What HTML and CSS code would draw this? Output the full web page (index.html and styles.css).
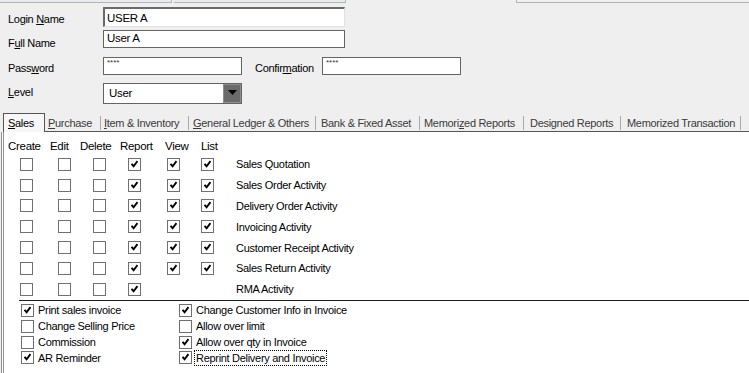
FILE: index.html
```html
<!DOCTYPE html>
<html>
<head>
<meta charset="utf-8">
<link rel="stylesheet" href="styles.css">
</head>
<body>
<div class="topstrip"><i class="seg seg-a"></i><i class="seg seg-b"></i><i class="gapseg"></i><i class="seg seg-c"></i></div>

<div class="form">
  <div class="row r1">
    <label class="lbl">Login <u>N</u>ame</label>
    <div class="inp sunken w-long">USER A</div>
  </div>
  <div class="row r2">
    <label class="lbl">F<u>u</u>ll Name</label>
    <div class="inp w-long">User A</div>
  </div>
  <div class="row r3">
    <label class="lbl">Pass<u>w</u>ord</label>
    <div class="inp w-short pw">****</div>
    <label class="lbl conf">Confir<u>m</u>ation</label>
    <div class="inp w-short pw">****</div>
  </div>
  <div class="row r4">
    <label class="lbl"><u>L</u>evel</label>
    <div class="select">
      <span class="sel-text">User</span>
      <span class="sel-btn"><svg width="9" height="5" viewBox="0 0 9 5"><path d="M0 0H9L4.5 5Z" fill="#000"/></svg></span>
    </div>
  </div>
</div>

<div class="tabs">
  <div class="tab active w1"><span class="tl"><u>S</u>ales</span></div>
  <div class="tab w2"><span class="tl"><u>P</u>urchase</span></div>
  <div class="tab w3"><span class="tl"><u>I</u>tem &amp; Inventory</span></div>
  <div class="tab w4"><span class="tl"><u>G</u>eneral Ledger &amp; Others</span></div>
  <div class="tab w5"><span class="tl">Bank &amp; Fixed Asset</span></div>
  <div class="tab w6"><span class="tl">Memori<u>z</u>ed Reports</span></div>
  <div class="tab w7"><span class="tl">Designed Reports</span></div>
  <div class="tab w8"><span class="tl">Memorized Transaction</span></div>
  <div class="tab-fill"></div>
</div>

<div class="panel">
  <div class="heads">
    <span>Create</span><span>Edit</span><span>Delete</span><span>Report</span><span>View</span><span>List</span>
  </div>

  <div class="matrix">
    <i class="cb"></i><i class="cb"></i><i class="cb"></i><i class="cb on"></i><i class="cb on"></i><i class="cb on"></i><span class="rl">Sales Quotation</span>
    <i class="cb"></i><i class="cb"></i><i class="cb"></i><i class="cb on"></i><i class="cb on"></i><i class="cb on"></i><span class="rl">Sales Order Activity</span>
    <i class="cb"></i><i class="cb"></i><i class="cb"></i><i class="cb on"></i><i class="cb on"></i><i class="cb on"></i><span class="rl">Delivery Order Activity</span>
    <i class="cb"></i><i class="cb"></i><i class="cb"></i><i class="cb on"></i><i class="cb on"></i><i class="cb on"></i><span class="rl">Invoicing Activity</span>
    <i class="cb"></i><i class="cb"></i><i class="cb"></i><i class="cb on"></i><i class="cb on"></i><i class="cb on"></i><span class="rl">Customer Receipt Activity</span>
    <i class="cb"></i><i class="cb"></i><i class="cb"></i><i class="cb on"></i><i class="cb on"></i><i class="cb on"></i><span class="rl">Sales Return Activity</span>
    <i class="cb"></i><i class="cb"></i><i class="cb"></i><i class="cb on"></i><span></span><span></span><span class="rl">RMA Activity</span>
  </div>

  <div class="sep"></div>

  <div class="opts">
    <div class="opt"><i class="cb on"></i><span>Print sales invoice</span></div>
    <div class="opt"><i class="cb on"></i><span>Change Customer Info in Invoice</span></div>
    <div class="opt"><i class="cb"></i><span>Change Selling Price</span></div>
    <div class="opt"><i class="cb"></i><span>Allow over limit</span></div>
    <div class="opt"><i class="cb"></i><span>Commission</span></div>
    <div class="opt"><i class="cb on"></i><span>Allow over qty in Invoice</span></div>
    <div class="opt"><i class="cb on"></i><span>AR Reminder</span></div>
    <div class="opt"><i class="cb on"></i><span class="focus">Reprint Delivery and Invoice</span></div>
  </div>
</div>
</body>
</html>
```
FILE: styles.css
```css
* { box-sizing: border-box; }
html, body { margin: 0; padding: 0; }
body {
  width: 749px;
  height: 373px;
  overflow: hidden;
  background: #efefef;
  font-family: "Liberation Sans", Arial, sans-serif;
  font-size: 11px;
  letter-spacing: -0.3px;
  color: #000;
}
u { text-decoration: underline; text-underline-offset: 1px; }

/* top strip */
.topstrip { display: flex; height: 3px; }
.seg { display: block; height: 3px; font-style: normal; }
.seg-a { width: 172px; background: #e8ecee; border-bottom: 1px solid #b4b4b4; border-right: 1px solid #8fc6d0; }
.seg-b { width: 172px; background: #e8ecee; border-bottom: 1px solid #b4b4b4; border-right: 1px solid #8fc6d0; margin-left: 2px; }
.gapseg { display: block; width: 170px; }
.seg-c { flex: 1; border-bottom: 1px solid #b4b4b4; border-left: 1px solid #8fc6d0; }

/* form */
.form { display: flex; flex-direction: column; }
.row { display: flex; align-items: flex-start; padding-left: 8px; }
.r1 { margin-top: 4px; height: 20px; }
.r2 { margin-top: 3px; height: 18px; }
.r3 { margin-top: 9px; height: 18px; }
.r4 { margin-top: 8px; height: 21px; }
.lbl { width: 95px; line-height: 13px; }
.r1 .lbl { padding-top: 6px; }
.r2 .lbl { padding-top: 7px; }
.r3 .lbl { padding-top: 5px; }
.r4 .lbl { padding-top: 3px; }
.lbl.conf { width: 67px; margin-left: 13px; }

.inp {
  background: #fff;
  border: 1px solid #646464;
  padding-left: 3px;
  font-size: 11.5px;
}
.w-long { width: 242px; }
.w-short { width: 139px; }
.r1 .inp { height: 20px; line-height: 18px; }
.r2 .inp { height: 18px; line-height: 15px; }
.sunken {
  border-top: 2px solid #6a6a6a;
  border-left: 2px solid #6a6a6a;
  border-right: 1px solid #e2e2e2;
  border-bottom: 1px solid #e2e2e2;
  padding-left: 2px;
}
.pw { height: 18px; font-size: 8px; line-height: 8px; padding-top: 1px; letter-spacing: 0; color: #333; }

.select {
  display: flex;
  width: 139px;
  height: 21px;
  background: #fff;
  border: 1px solid #646464;
}
.sel-text { flex: 1; padding-left: 5px; line-height: 19px; font-size: 11.5px; }
.sel-btn {
  width: 18px;
  background: #6b6b6b;
  border: 1px solid #8e8e8e;
  display: flex;
  align-items: center;
  justify-content: center;
  padding-bottom: 2px;
}

/* tabs */
.tabs { display: flex; align-items: flex-end; margin-top: 9px; padding-left: 3px; height: 19px; }
.tab { height: 19px; border-bottom: 1px solid #555; padding-top: 3px; color: #3a3a3a; }
.tab .tl { display: block; height: 14px; line-height: 14px; border-right: 1px solid #a8a8a8; white-space: nowrap; }
.tab.active {
  height: 19px;
  padding-top: 2px;
  border: 1px solid #555;
  border-bottom: none;
  background: #f7f7f7;
  color: #000;
}
.tab.active .tl { border-right: none; padding-left: 4px; }
.w1 { width: 42px; }
.w2 { width: 56px; } .w2 .tl { padding-left: 3px; }
.w3 { width: 88px; } .w3 .tl { padding-left: 3px; }
.w4 { width: 127px; } .w4 .tl { padding-left: 4px; }
.w5 { width: 104px; } .w5 .tl { padding-left: 5px; }
.w6 { width: 104px; } .w6 .tl { padding-left: 4px; }
.w7 { width: 97px; } .w7 .tl { padding-left: 6px; }
.w8 { width: 120px; } .w8 .tl { padding-left: 6px; }
.tab-fill { flex: 1; height: 19px; border-bottom: 1px solid #555; }

/* panel */
.panel {
  margin-left: 1px;
  border-left: 3px double #8f8f8f;
  background: #fff;
  height: 241px;
}
.heads {
  display: grid;
  grid-template-columns: 42px 30px 40px 45px 36px auto;
  padding-left: 4px;
  padding-top: 6px;
  height: 22px;
  line-height: 16px;
  font-size: 11.5px;
}
.matrix {
  display: grid;
  grid-template-columns: 37.5px 35.5px 35px 38.5px 34.5px 35px auto;
  grid-auto-rows: 20.8px;
  align-items: center;
  padding-left: 16px;
}
.rl { font-size: 11px; }

.cb {
  display: block;
  width: 13px;
  height: 13px;
  border: 1px solid #707070;
  background: #fff;
  position: relative;
}
.cb.on::after {
  content: "";
  position: absolute;
  left: 2px;
  top: 1px;
  width: 7px;
  height: 8px;
  background:
    url("data:image/svg+xml;utf8,<svg xmlns='http://www.w3.org/2000/svg' width='7' height='8' viewBox='0 0 7 8'><path d='M0.5 3.8 L2.6 6.2 L6.5 1' fill='none' stroke='black' stroke-width='1.9'/></svg>") no-repeat;
}

.sep { margin-left: 15px; height: 1px; background: #1e1e1e; }

.opts {
  display: grid;
  grid-template-columns: 158px auto;
  grid-auto-rows: 15.8px;
  padding-left: 17px;
  margin-top: 2px;
  align-items: center;
}
.opt { display: flex; align-items: center; gap: 4px; white-space: nowrap; font-size: 11px; }
.focus { outline: 1px dotted #000; outline-offset: 0; padding: 0 1px; margin-left: -1px; line-height: 14px; }
```
